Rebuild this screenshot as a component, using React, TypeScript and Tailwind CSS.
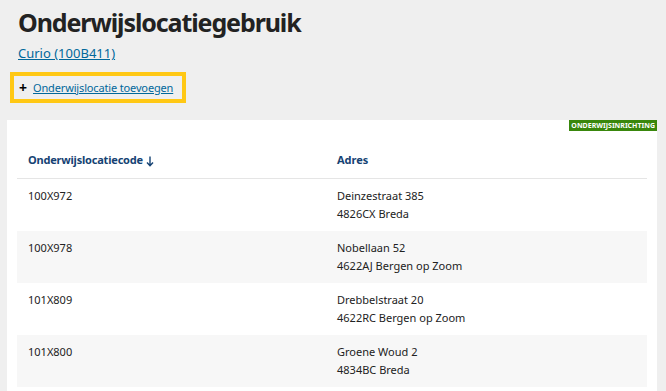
import React from 'react';

const rows = [
  { code: '100X972', street: 'Deinzestraat 385', city: '4826CX Breda' },
  { code: '100X978', street: 'Nobellaan 52', city: '4622AJ Bergen op Zoom' },
  { code: '101X809', street: 'Drebbelstraat 20', city: '4622RC Bergen op Zoom' },
  { code: '101X800', street: 'Groene Woud 2', city: '4834BC Breda' },
];

const App: React.FC = () => {
  return (
    <div
      className="h-[391px] w-[666px] overflow-hidden bg-[#efefef] text-[#222]"
      style={{ fontFamily: '"Noto Sans", "Open Sans", sans-serif' }}
    >
      <div className="px-[18px] pt-[4px]">
        <h1 className="text-[25px] font-bold leading-[36px] tracking-[-1.1px] text-[#222]">Onderwijslocatiegebruik</h1>
        <a href="#" className="mt-[4px] block text-[13px] leading-[18px] text-[#01689b] underline">
          Curio (100B411)
        </a>
      </div>
      <div className="ml-[10px] mt-[10px] inline-flex h-[31px] items-center gap-[6px] border-[4px] border-[#ffc814] pl-[5px] pr-[9px]">
        <span className="text-[14px] font-bold leading-none text-black">+</span>
        <a href="#" className="text-[11px] leading-none tracking-[-0.15px] text-[#01689b] underline">
          Onderwijslocatie toevoegen
        </a>
      </div>
      <div className="relative ml-[7px] mt-[17px] w-[650px] bg-white px-[10px] pb-[20px] pt-[30px]">
        <span className="absolute right-0 top-0 bg-[#39870c] px-[2px] text-[7px] font-bold leading-[11px] text-white">
          ONDERWIJSINRICHTING
        </span>
        <div className="flex h-[29px] items-start border-b border-[#e5e5e5] text-[11px] font-bold leading-[20px] text-[#154273]">
          <div className="flex w-[320px] items-center gap-[3px] pl-[11px] tracking-[-0.2px]">
            <span>Onderwijslocatiecode</span>
            <svg width="8" height="11" viewBox="0 0 8 11" className="mt-[2px]">
              <path d="M4 0.5 V9.5 M1 6.5 L4 9.8 L7 6.5" stroke="#154273" strokeWidth="1.4" fill="none" />
            </svg>
          </div>
          <div>Adres</div>
        </div>
        {rows.map((r, i) => (
          <div
            key={r.code}
            className={`flex h-[52px] pt-[8px] text-[11px] leading-[18px] ${i % 2 === 1 ? 'bg-[#f7f7f7]' : 'bg-white'}`}
          >
            <div className="w-[320px] pl-[11px]">{r.code}</div>
            <div>
              <div>{r.street}</div>
              <div>{r.city}</div>
            </div>
          </div>
        ))}
      </div>
    </div>
  );
};

export default App;
